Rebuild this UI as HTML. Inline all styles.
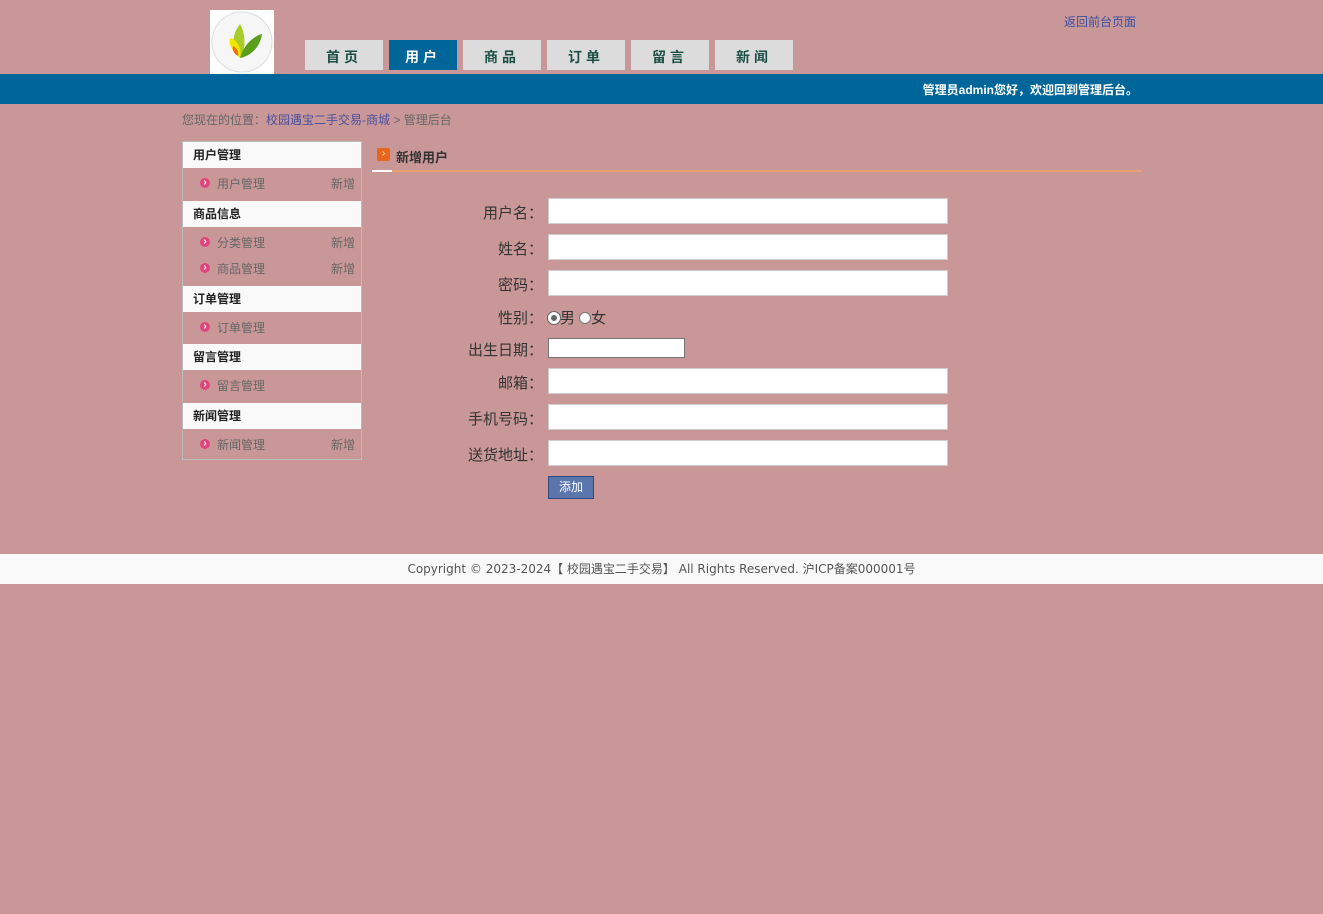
<!DOCTYPE html>
<html><head><meta charset="utf-8"><style>
*{margin:0;padding:0;box-sizing:border-box}
body{width:1323px;height:914px;background:#c99797;font-family:"Liberation Sans","Noto Sans CJK SC",sans-serif;font-size:12px;color:#555;position:relative;overflow:hidden}
.abs{position:absolute}
.tab{position:absolute;top:40px;height:30px;background:#dcdcdc;color:#1b4f45;font-weight:bold;font-size:14px;text-align:center;line-height:34px;letter-spacing:4px}
.tab.on{background:#006699;color:#fff}
.side{position:absolute;left:182px;top:141px;width:180px;height:319px;border:1px solid #bbb}
.h{height:26px;background:#f9f9f9;color:#222;font-weight:bold;line-height:26px;padding-left:10px}
.grp{padding:3px 0}
.it{height:26.5px;line-height:26px;padding-left:34px;position:relative;color:#666;font-size:12px}
.it:before{content:"›";position:absolute;left:17px;top:7px;width:10px;height:10px;border-radius:50%;background:#e0457d;color:#fff;font-size:10px;line-height:9px;text-align:center;font-weight:bold}
.it span{position:absolute;right:6px}
.lbl{position:absolute;right:780px;font-size:15px;color:#333;text-align:right}
.inp{position:absolute;left:548px;width:400px;height:26px;background:#fff;border:1px solid #ccc}
</style></head><body>
<div class="abs" style="left:210px;top:10px;width:64px;height:64px;background:#fff">
<svg width="64" height="64"><circle cx="32" cy="32" r="30" fill="#f6f6f6" stroke="#ddd"/><path d="M30 48 C20 40 22 24 30 14 C36 24 36 40 30 48Z" fill="#a8cc2a"/><path d="M30 48 C34 34 44 26 52 24 C50 38 40 46 30 48Z" fill="#5a9e1c"/><path d="M30 48 C24 42 18 36 20 28 C28 30 32 40 30 48Z" fill="#f5e800"/><path d="M28 46 C24 44 22 40 23 36 C27 38 29 42 28 46Z" fill="#f07010"/></svg></div>
<div class="tab" style="left:305px;width:78px">首页</div>
<div class="tab on" style="left:389px;width:68px">用户</div>
<div class="tab" style="left:463px;width:78px">商品</div>
<div class="tab" style="left:547px;width:78px">订单</div>
<div class="tab" style="left:631px;width:78px">留言</div>
<div class="tab" style="left:715px;width:78px">新闻</div>
<div class="abs" style="left:1064px;top:13px;color:#3a4fa0;font-size:12px">返回前台页面</div>
<div class="abs" style="left:0;top:74px;width:1323px;height:30px;background:#006699"></div>
<div class="abs" style="right:185px;top:81px;color:#fff;font-weight:bold;font-size:12px">管理员admin您好，欢迎回到管理后台。</div>
<div class="abs" style="left:182px;top:111px;color:#666">您现在的位置：<span style="color:#4a4fa0">校园遇宝二手交易-商城</span> &gt; 管理后台</div>
<div class="side">
<div class="h">用户管理</div><div class="grp"><div class="it">用户管理<span>新增</span></div></div>
<div class="h">商品信息</div><div class="grp"><div class="it">分类管理<span>新增</span></div><div class="it">商品管理<span>新增</span></div></div>
<div class="h">订单管理</div><div class="grp"><div class="it">订单管理</div></div>
<div class="h">留言管理</div><div class="grp"><div class="it">留言管理</div></div>
<div class="h">新闻管理</div><div class="grp"><div class="it">新闻管理<span>新增</span></div></div>
</div>
<div class="abs" style="left:377px;top:148px;width:13px;height:13px;background:#e8671c;border-radius:2px;color:#fff;font-size:10px;line-height:12px;text-align:center">›</div>
<div class="abs" style="left:396px;top:147px;font-weight:bold;font-size:13px;color:#333">新增用户</div>
<div class="abs" style="left:372px;top:170px;width:770px;height:2px;background:#e8a070"></div>
<div class="abs" style="left:372px;top:170px;width:20px;height:2px;background:#fff"></div>
<div class="lbl" style="top:202px">用户名：</div><div class="inp" style="top:198px"></div>
<div class="lbl" style="top:238px">姓名：</div><div class="inp" style="top:234px"></div>
<div class="lbl" style="top:274px">密码：</div><div class="inp" style="top:270px"></div>
<div class="lbl" style="top:307px">性别：</div>
<div class="abs" style="left:548px;top:307px;font-size:15px;color:#333"><span style="display:inline-block;width:12px;height:12px;border-radius:50%;border:3px solid #fff;background:#666;box-shadow:0 0 0 1px #666;vertical-align:-1px"></span>男 <span style="display:inline-block;width:12px;height:12px;border-radius:50%;background:#fff;border:1px solid #777;vertical-align:-1px"></span>女</div>
<div class="lbl" style="top:339px">出生日期：</div><div class="abs" style="left:548px;top:338px;width:137px;height:20px;background:#fff;border:1px solid #777"></div>
<div class="lbl" style="top:372px">邮箱：</div><div class="inp" style="top:368px"></div>
<div class="lbl" style="top:408px">手机号码：</div><div class="inp" style="top:404px"></div>
<div class="lbl" style="top:444px">送货地址：</div><div class="inp" style="top:440px"></div>
<div class="abs" style="left:548px;top:476px;width:46px;height:23px;background:#5b76ad;border:1px solid #2e4a80;color:#fff;text-align:center;line-height:21px;font-size:12px">添加</div>
<div class="abs" style="left:0;top:554px;width:1323px;height:30px;background:#f9f9f9;text-align:center;line-height:30px;color:#555;font-size:12px;font-family:'DejaVu Sans','Noto Sans CJK SC',sans-serif">Copyright © 2023-2024【 校园遇宝二手交易】 All Rights Reserved. 沪ICP备案000001号</div>
</body></html>
